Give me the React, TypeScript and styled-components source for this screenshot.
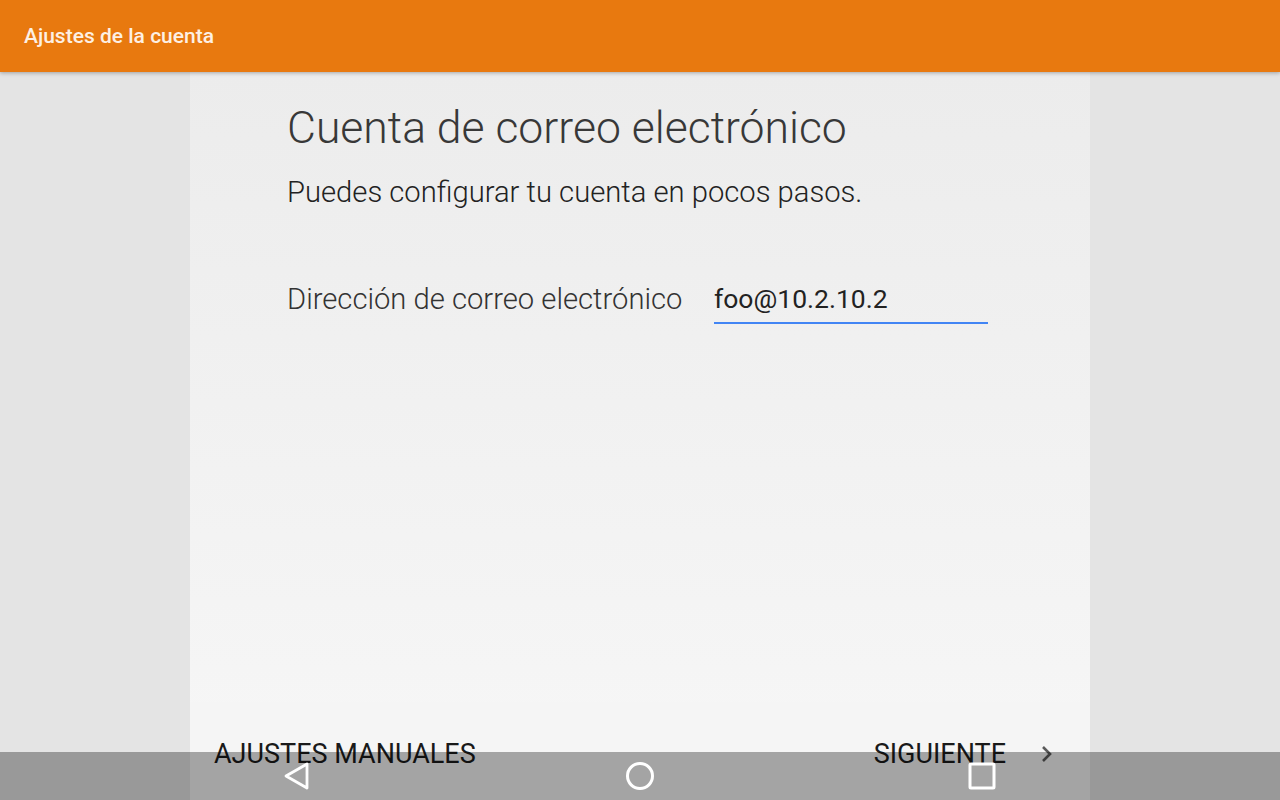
import React, { FC } from 'react';
import styled, { createGlobalStyle } from 'styled-components';

const GlobalStyle = createGlobalStyle`
  html, body {
    margin: 0;
    padding: 0;
    height: 100%;
    overflow: hidden;
  }
  body {
    font-family: Roboto, 'Noto Sans', 'Liberation Sans', sans-serif;
    background: #e4e4e4;
  }
  #root {
    height: 100%;
  }
`;

const light = `'Roboto Light', Roboto, 'Noto Sans', sans-serif`;

const Screen = styled.div`
  display: flex;
  flex-direction: column;
  height: 100vh;
`;

const AppBar = styled.header`
  position: relative;
  z-index: 2;
  display: flex;
  align-items: center;
  height: 72px;
  padding: 0 24px;
  flex-shrink: 0;
  background: #e8790f;
  box-shadow: 0 1px 4px rgba(0, 0, 0, 0.3);
`;

const AppTitle = styled.h1`
  margin: 0;
  font-size: 21px;
  font-weight: 500;
  color: #fdf0e4;
`;

const Body = styled.main`
  flex: 1;
  display: flex;
  justify-content: center;
  min-height: 0;
`;

const Card = styled.section`
  width: 900px;
  display: flex;
  flex-direction: column;
  background: linear-gradient(#ececec, #f7f7f7);
`;

const Content = styled.div`
  flex: 1;
  padding: 26px 97px 0;
`;

const Heading = styled.h2`
  margin: 0;
  font-family: ${light};
  font-size: 44.5px;
  line-height: 60px;
  font-weight: 300;
  color: #383838;
`;

const Lead = styled.p`
  margin: 16px 0 0;
  font-family: ${light};
  font-size: 29.2px;
  line-height: 36px;
  font-weight: 300;
  color: #222;
`;

const FieldRow = styled.div`
  display: flex;
  align-items: flex-start;
  margin-top: 71px;
`;

const FieldLabel = styled.label`
  width: 427px;
  font-family: ${light};
  font-size: 29.2px;
  line-height: 36px;
  font-weight: 300;
  color: #333;
`;

const FieldInput = styled.div`
  width: 274px;
  font-size: 26.5px;
  line-height: 36px;
  font-weight: 400;
  color: #222;
  padding-bottom: 5px;
  border-bottom: 2px solid #4285f4;
`;

const Footer = styled.footer`
  height: 98px;
  flex-shrink: 0;
  display: flex;
  justify-content: space-between;
  padding: 36px 36px 0 24px;
  box-sizing: border-box;
  background: #f5f5f5;
`;

const FooterButton = styled.button`
  display: flex;
  align-items: center;
  gap: 34px;
  height: 32px;
  padding: 0;
  border: none;
  background: none;
  font-family: inherit;
  font-size: 27px;
  font-weight: 400;
  color: #1a1a1a;
`;

const NavBar = styled.nav`
  position: fixed;
  left: 0;
  right: 0;
  bottom: 0;
  height: 48px;
  display: flex;
  justify-content: center;
  align-items: center;
  gap: 262px;
  background: rgba(0, 0, 0, 0.33);
`;

const NavKey = styled.div`
  width: 80px;
  height: 48px;
  display: flex;
  justify-content: center;
  align-items: center;
`;

const Chevron: FC = () => (
  <svg width="14" height="20" viewBox="0 0 14 20">
    <path d="M3 3 L10 10 L3 17" fill="none" stroke="#5a5a5a" strokeWidth="2.6" />
  </svg>
);

const BackIcon: FC = () => (
  <svg width="32" height="32" viewBox="0 0 32 32">
    <path d="M4 16 L25 4 L25 28 Z" fill="none" stroke="#fff" strokeWidth="2.8" strokeLinejoin="round" />
  </svg>
);

const HomeIcon: FC = () => (
  <svg width="32" height="32" viewBox="0 0 32 32">
    <circle cx="16" cy="16" r="12.5" fill="none" stroke="#fff" strokeWidth="3" />
  </svg>
);

const RecentsIcon: FC = () => (
  <svg width="32" height="32" viewBox="0 0 32 32">
    <rect x="4" y="4" width="24" height="24" rx="1" fill="none" stroke="#fff" strokeWidth="3" />
  </svg>
);

export default function App() {
  return (
    <>
      <GlobalStyle />
      <Screen>
        <AppBar>
          <AppTitle>Ajustes de la cuenta</AppTitle>
        </AppBar>
        <Body>
          <Card>
            <Content>
              <Heading>Cuenta de correo electrónico</Heading>
              <Lead>Puedes configurar tu cuenta en pocos pasos.</Lead>
              <FieldRow>
                <FieldLabel>Dirección de correo electrónico</FieldLabel>
                <FieldInput>foo@10.2.10.2</FieldInput>
              </FieldRow>
            </Content>
            <Footer>
              <FooterButton>AJUSTES MANUALES</FooterButton>
              <FooterButton>
                SIGUIENTE
                <Chevron />
              </FooterButton>
            </Footer>
          </Card>
        </Body>
      </Screen>
      <NavBar>
        <NavKey>
          <BackIcon />
        </NavKey>
        <NavKey>
          <HomeIcon />
        </NavKey>
        <NavKey>
          <RecentsIcon />
        </NavKey>
      </NavBar>
    </>
  );
}
